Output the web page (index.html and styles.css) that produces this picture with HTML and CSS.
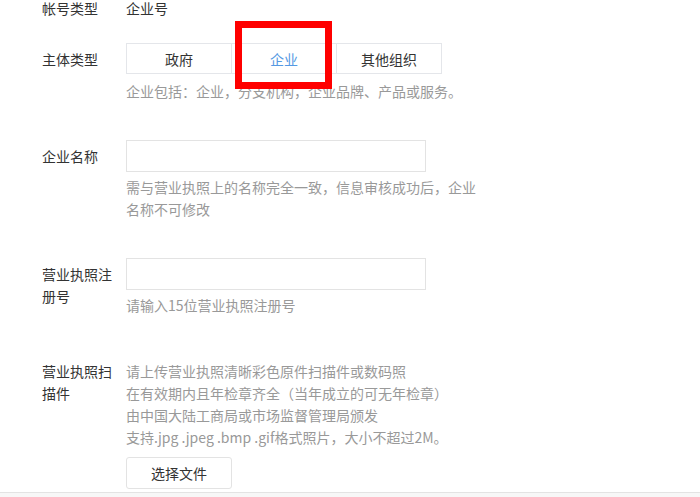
FILE: index.html
```html
<!DOCTYPE html>
<html lang="zh-CN">
<head>
<meta charset="utf-8">
<title>企业信息</title>
<link rel="stylesheet" href="styles.css">
</head>
<body>
<div class="page">
  <div class="form">
    <div class="row row-account">
      <div class="label label-flat">帐号类型</div>
      <div class="content"><div class="value">企业号</div></div>
    </div>

    <div class="row row-type">
      <div class="label">主体类型</div>
      <div class="content">
        <div class="seg">
          <button class="seg-btn" type="button">政府</button>
          <button class="seg-btn seg-active" type="button">企业</button>
          <button class="seg-btn" type="button">其他组织</button>
        </div>
        <p class="help">企业包括：企业，分支机构，企业品牌、产品或服务。</p>
      </div>
    </div>

    <div class="row row-name">
      <div class="label">企业名称</div>
      <div class="content">
        <input class="field" type="text">
        <p class="help">需与营业执照上的名称完全一致，信息审核成功后，企业名称不可修改</p>
      </div>
    </div>

    <div class="row row-reg">
      <div class="label">营业执照注册号</div>
      <div class="content">
        <input class="field" type="text">
        <p class="help">请输入15位营业执照注册号</p>
      </div>
    </div>

    <div class="row row-scan">
      <div class="label label-flat">营业执照扫描件</div>
      <div class="content">
        <p class="help help-plain">请上传营业执照清晰彩色原件扫描件或数码照<br>在有效期内且年检章齐全（当年成立的可无年检章）<br>由中国大陆工商局或市场监督管理局颁发<br>支持.jpg .jpeg .bmp .gif格式照片，大小不超过2M。</p>
        <button class="file-btn" type="button">选择文件</button>
      </div>
    </div>
  </div>
  <div class="footer"></div>
  <div class="highlight"></div>
</div>
</body>
</html>
```

FILE: styles.css
```css
html, body {
  margin: 0;
  padding: 0;
  background: #fff;
  overflow: hidden;
}

body {
  font-family: "Noto Sans CJK SC", "Noto Sans", sans-serif;
  font-size: 14px;
  line-height: 22px;
  color: #333;
}

.page {
  position: relative;
  width: 700px;
  height: 497px;
  overflow: hidden;
}

.form {
  padding-left: 42px;
}

.row {
  display: grid;
  grid-template-columns: 72px 356px;
  column-gap: 12px;
  align-items: start;
}

.row-account {
  line-height: 16px;
  margin-bottom: 27px;
}
.row-type { margin-bottom: 38px; }
.row-name { margin-bottom: 38px; }
.row-reg { margin-bottom: 44px; }

.label {
  padding-top: 5px;
  color: #333;
}

.label-flat { padding-top: 0; }

.content {
  display: flex;
  flex-direction: column;
  align-items: flex-start;
}

.value { color: #333; }

.seg {
  display: flex;
}

.seg-btn {
  box-sizing: border-box;
  width: 106px;
  height: 31px;
  margin: 0;
  padding: 0;
  border: 1px solid #e4e6ea;
  background: #fff;
  font-family: inherit;
  font-size: 14px;
  color: #333;
}

.seg-btn + .seg-btn { margin-left: -1px; }

.seg-active { color: #5599e3; }

.help {
  margin: 6px 0 0;
  color: #999;
}

.help-plain { margin-top: 0; }

.field {
  box-sizing: border-box;
  width: 300px;
  height: 32px;
  margin: 0 0 -1px;
  border: 1px solid #e3e3e3;
  background: #fff;
  outline: none;
}

.row-name .help,
.row-reg .help { margin-top: 5px; }

.file-btn {
  box-sizing: border-box;
  width: 106px;
  height: 32px;
  margin-top: 9px;
  border: 1px solid #e3e3e3;
  border-radius: 3px;
  background: #fff;
  font-family: inherit;
  font-size: 14px;
  color: #333;
}

.footer {
  margin-top: 3px;
  height: 40px;
  border-top: 1px solid #e3e3e3;
  background: #f7f7f7;
}

.highlight {
  position: absolute;
  left: 235px;
  top: 21px;
  width: 83px;
  height: 54px;
  border: 7px solid #ff0000;
}
```
